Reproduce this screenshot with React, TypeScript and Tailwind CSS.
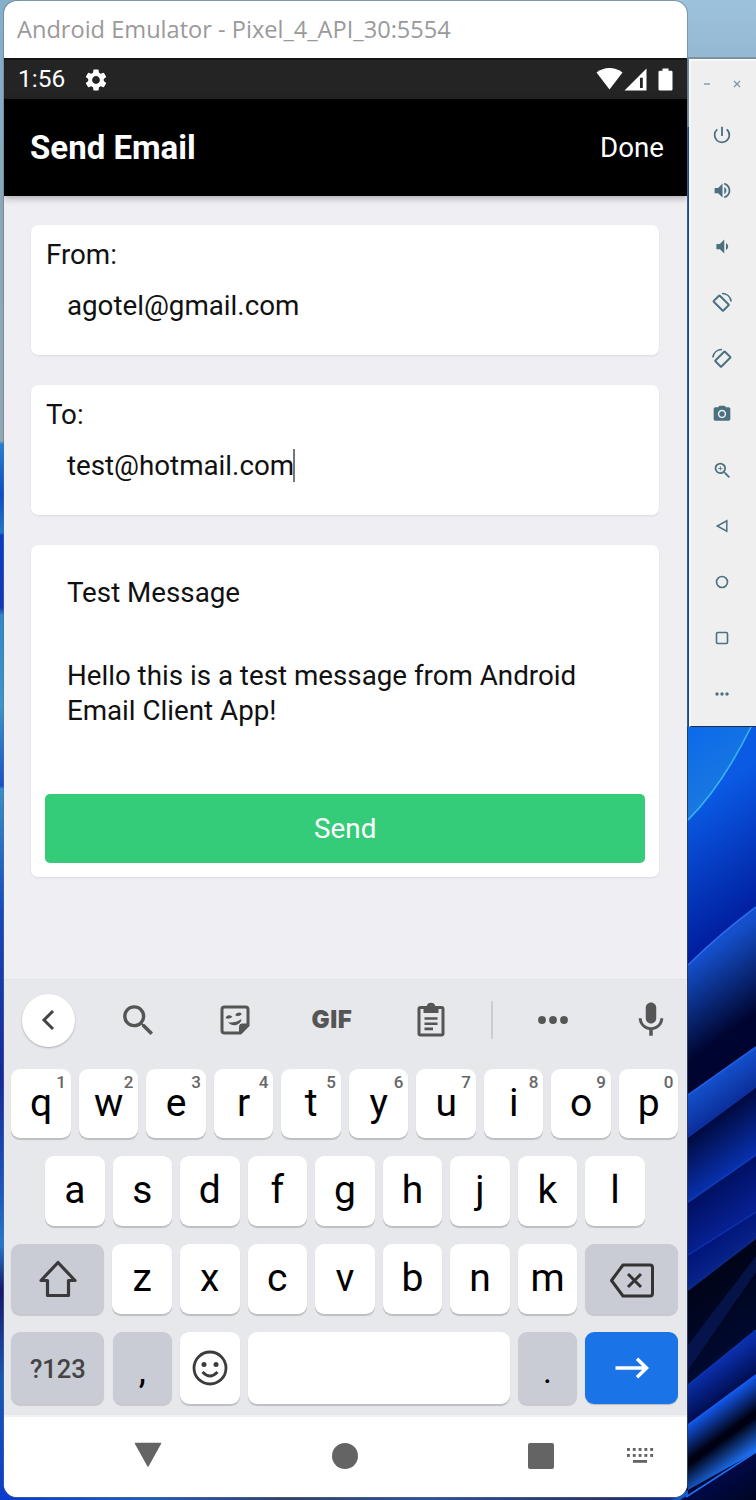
import type { ReactNode } from "react";
import {
  MdSettings,
  MdPowerSettingsNew,
  MdVolumeUp,
  MdVolumeDown,
  MdCameraAlt,
  MdZoomIn,
  MdSearch,
  MdMic,
} from "react-icons/md";

const bands = [
  { id: "a", d: "M688 727H751Q722 786 688 820Z", y1: 727, y2: 830, c1: "#0b6aea", c2: "#1c7ade" },
  { id: "b", d: "M688 820Q722 786 751 727H756V907Q722 932 688 965Z", y1: 810, y2: 965, c1: "#0a5ae4", c2: "#001c9c" },
  { id: "c", d: "M688 965Q722 932 756 907V1047L688 1095Z", y1: 965, y2: 1062, c1: "#1450cc", c2: "#000530" },
  { id: "d", d: "M688 1095L756 1047V1088L688 1140Z", y1: 1095, y2: 1142, c1: "#1450cc", c2: "#0a2a94" },
  { id: "e", d: "M688 1138L756 1088V1155L688 1202Z", y1: 1138, y2: 1202, c1: "#000a40", c2: "#0830ac" },
  { id: "f", d: "M688 1202L756 1155V1212L688 1255Z", y1: 1202, y2: 1255, c1: "#000f60", c2: "#062090" },
  { id: "g", d: "M688 1255L756 1212V1238L688 1290Z", y1: 1255, y2: 1290, c1: "#001478", c2: "#08248a" },
  { id: "h", d: "M688 1290L756 1238V1330L688 1385Z", y1: 1290, y2: 1385, c1: "#000418", c2: "#000a30" },
  { id: "i", d: "M688 1385L756 1330V1375L688 1425Z", y1: 1385, y2: 1425, c1: "#0a2ea8", c2: "#000c4c" },
  { id: "j", d: "M688 1425L756 1375V1425L688 1470Z", y1: 1425, y2: 1460, c1: "#1256e8", c2: "#000214" },
  { id: "k", d: "M688 1466L756 1418V1452L670 1500H688Z", y1: 1466, y2: 1498, c1: "#000214", c2: "#1c6cea" },
  { id: "l", d: "M680 1500L756 1452V1500Z", y1: 1495, y2: 1560, c1: "#000a4a", c2: "#00041c" },
];

const edges = [
  { d: "M688 820Q722 786 751 727", c: "#38b4f4" },
  { d: "M688 965Q722 932 756 907", c: "#2a6cea" },
  { d: "M688 1095L756 1047", c: "#1c5ee2" },
  { d: "M688 1202L756 1155", c: "#0e3cb8" },
  { d: "M688 1255L756 1212", c: "#0c30a4" },
  { d: "M688 1290L756 1238", c: "#0e2a88" },
  { d: "M688 1385L756 1330", c: "#0c36b4" },
  { d: "M688 1425L756 1375", c: "#185cee" },
  { d: "M686 1497L756 1452", c: "#1e70ee" },
];

function Wallpaper() {
  return (
    <svg className="absolute inset-0" width="756" height="1500" viewBox="0 0 756 1500">
      <defs>
        <linearGradient id="sky" x1="0" y1="0" x2="0" y2="1">
          <stop offset="0" stopColor="#9dc2db" />
          <stop offset="1" stopColor="#94b8d2" />
        </linearGradient>
        <linearGradient id="side" gradientUnits="userSpaceOnUse" x1="0" y1="0" x2="0" y2="1500">
          <stop offset="0" stopColor="#85b0ca" />
          <stop offset="0.14" stopColor="#8aa6b8" />
          <stop offset="0.294" stopColor="#94a6b2" />
          <stop offset="0.296" stopColor="#2480d4" />
          <stop offset="0.33" stopColor="#0c4cc8" />
          <stop offset="0.355" stopColor="#1c78c8" />
          <stop offset="0.357" stopColor="#0c3ac8" />
          <stop offset="0.405" stopColor="#1238b8" />
          <stop offset="0.41" stopColor="#2e88cc" />
          <stop offset="0.47" stopColor="#3c96c8" />
          <stop offset="0.524" stopColor="#1850cc" />
          <stop offset="0.526" stopColor="#3890c8" />
          <stop offset="0.6" stopColor="#1850c4" />
          <stop offset="0.61" stopColor="#1846bc" />
          <stop offset="0.72" stopColor="#16289c" />
          <stop offset="0.8" stopColor="#1c5cc4" />
          <stop offset="0.83" stopColor="#2478cc" />
          <stop offset="0.86" stopColor="#17186c" />
          <stop offset="0.92" stopColor="#1858b8" />
          <stop offset="1" stopColor="#0c3ccc" />
        </linearGradient>
        <linearGradient id="foot">
          <stop offset="0" stopColor="#0c3ccc" />
          <stop offset="0.2" stopColor="#245cb8" />
          <stop offset="0.4" stopColor="#34406c" />
          <stop offset="0.6" stopColor="#2c5494" />
          <stop offset="0.85" stopColor="#2c3468" />
          <stop offset="1" stopColor="#0c2c90" />
        </linearGradient>
        {bands.map((b) => (
          <linearGradient
            key={b.id}
            id={`band-${b.id}`}
            gradientUnits="userSpaceOnUse"
            x1="0"
            y1={b.y1}
            x2="0"
            y2={b.y2}
            gradientTransform="translate(688 0) skewY(-36)"
          >
            <stop offset="0" stopColor={b.c1} />
            <stop offset="1" stopColor={b.c2} />
          </linearGradient>
        ))}
      </defs>
      <rect x="0" y="0" width="756" height="60" fill="url(#sky)" />
      <rect x="0" y="0" width="20" height="1500" fill="url(#side)" />
      <rect x="680" y="59" width="12" height="68" fill="#6f8ea3" />
      <rect x="680" y="127" width="12" height="600" fill="#164a96" />
      <rect x="688" y="57" width="68" height="2" fill="#7d93a2" />
      <rect x="10" y="1480" width="690" height="20" fill="url(#foot)" />
      <rect x="686" y="727" width="70" height="773" fill="#000838" />
      {bands.map((b) => (
        <path key={b.id} d={b.d} fill={`url(#band-${b.id})`} />
      ))}
      <path d="M688 1345L756 1256V1272L688 1370Z" fill="#0a2478" opacity="0.45" />
      {edges.map((e) => (
        <path key={e.d} d={e.d} stroke={e.c} strokeWidth="1.6" fill="none" />
      ))}
    </svg>
  );
}

function RotateIcon({ mirrored }: { mirrored?: boolean }) {
  return (
    <svg width="22" height="22" viewBox="0 0 22 22" fill="none" className={mirrored ? "-scale-x-100" : ""}>
      <rect x="5.9" y="4.3" width="8.6" height="13.6" rx="0.6" transform="rotate(-45 10.2 11.1)" stroke="currentColor" strokeWidth="2" />
      <path d="M11 1.5c4.6 0 8.400 3.100 9.200 8" stroke="currentColor" strokeWidth="1.600" />
    </svg>
  );
}

const tools: { name: string; icon: ReactNode }[] = [
  { name: "Power", icon: <MdPowerSettingsNew size={22} /> },
  { name: "Volume up", icon: <MdVolumeUp size={21} /> },
  { name: "Volume down", icon: <MdVolumeDown size={21} /> },
  { name: "Rotate left", icon: <RotateIcon /> },
  { name: "Rotate right", icon: <RotateIcon mirrored /> },
  { name: "Screenshot", icon: <MdCameraAlt size={20} /> },
  { name: "Zoom", icon: <MdZoomIn size={21} /> },
  {
    name: "Back",
    icon: (
      <svg width="16" height="16" viewBox="0 0 16 16" fill="none">
        <path d="M12.800 2.800v10.400L3.200 8z" stroke="currentColor" strokeWidth="1.500" />
      </svg>
    ),
  },
  {
    name: "Home",
    icon: (
      <svg width="16" height="16" viewBox="0 0 16 16" fill="none">
        <circle cx="8" cy="8" r="5.500" stroke="currentColor" strokeWidth="1.600" />
      </svg>
    ),
  },
  {
    name: "Overview",
    icon: (
      <svg width="16" height="16" viewBox="0 0 16 16" fill="none">
        <rect x="2.500" y="2.500" width="11" height="11" rx="1.200" stroke="currentColor" strokeWidth="1.600" />
      </svg>
    ),
  },
  {
    name: "More",
    icon: (
      <svg width="16" height="16" viewBox="0 0 16 16" fill="currentColor">
        <circle cx="3" cy="8" r="1.700" />
        <circle cx="8" cy="8" r="1.700" />
        <circle cx="13" cy="8" r="1.700" />
      </svg>
    ),
  },
];

function ToolPanel() {
  return (
    <aside className="mt-[59px] ml-[2px] flex h-[668px] w-[67px] flex-col border-t-2 border-b border-l-2 border-t-[#f8f8f9] border-b-[#222c48] border-l-[#f8f8f9] bg-[#efeff0] text-[#4b7181]">
      <div className="flex h-[46px] shrink-0 items-center pl-[10px] text-[#8096a2]">
        <svg width="12" height="12" viewBox="0 0 12 12">
          <path d="M3 6h6" stroke="currentColor" strokeWidth="1.400" />
        </svg>
        <svg width="12" height="12" viewBox="0 0 12 12" className="ml-[18px]">
          <path d="M3 3l6 6M9 3l-6 6" stroke="currentColor" strokeWidth="1.300" />
        </svg>
      </div>
      {tools.map((t) => (
        <button key={t.name} aria-label={t.name} className="flex h-[55.9px] w-[62px] shrink-0 items-center justify-center">
          {t.icon}
        </button>
      ))}
    </aside>
  );
}

function StatusBar() {
  return (
    <div className="flex h-[41px] shrink-0 items-center border-t-2 border-[#151515] bg-[#242424] pl-[14px] text-white">
      <span className="w-[65px] text-[24.5px] leading-none">1:56</span>
      <MdSettings size={26} />
      <svg className="mr-[14px] mb-[2px] ml-auto" width="77" height="24" viewBox="0 0 77 24" fill="white">
        <path d="M0.500 5.500C7.500-.6 19.500-.6 26.500 5.500L13.500 22.500Z" />
        <path fillRule="evenodd" d="M28.500 23.500L50.500 1.500V23.500ZM44 10.800V21H46.800V10.800Z" />
        <path d="M66.500 1.500h6v2.200h2.700q1.300 0 1.300 1.300v17.200q0 1.300-1.300 1.300h-11.400q-1.300 0-1.300-1.300V5q0-1.300 1.300-1.300h2.700z" />
      </svg>
    </div>
  );
}

function Card({ className, children }: { className: string; children: ReactNode }) {
  return (
    <section className={`mr-[28px] ml-[27.400px] rounded-[7px] bg-white shadow-[0_1px_2px_rgba(0,0,0,0.09)] ${className}`}>{children}</section>
  );
}

function Field({ label, value, caret }: { label: string; value: string; caret?: boolean }) {
  return (
    <Card className="mb-[30px] h-[130px] px-[14.500px] pt-[12px]">
      <div className="h-[36px] leading-[36px]">{label}</div>
      <div className="mt-[15px] flex h-[36px] items-center pl-[21px]">
        <span>{value}</span>
        {caret && <span className="-ml-px h-[33px] w-[1.5px] bg-[#777]" />}
      </div>
    </Card>
  );
}

function Key({ label, hint }: { label: string; hint?: string }) {
  return (
    <button className="relative flex h-full w-[59.5px] items-center justify-center rounded-[9px] bg-white pb-[1px] text-[39px] leading-none text-black shadow-[0_2px_1px_rgba(0,0,0,0.18)]">
      {label}
      {hint && <span className="absolute top-[4px] right-[5px] text-[17px] leading-[19px] font-medium text-[#666]">{hint}</span>}
    </button>
  );
}

const modKey = "flex h-full items-center justify-center rounded-[9px] bg-[#c9ccd5] shadow-[0_2px_1px_rgba(0,0,0,0.14)]";

function Suggestions() {
  return (
    <div className="flex h-[89px] items-center pb-[9px] text-[#555]">
      <div className="flex w-[88px] justify-center">
        <span className="flex size-[53px] items-center justify-center rounded-full bg-white shadow-[0_1px_2px_rgba(0,0,0,0.25)]">
          <svg width="24" height="24" viewBox="0 0 24 24" fill="none" stroke="#444" strokeWidth="3">
            <path d="M17 3L8 12l9 9" />
          </svg>
        </span>
      </div>
      <div className="flex w-[92px] justify-center">
        <MdSearch size={41} />
      </div>
      <div className="flex w-[102px] justify-center">
        <svg width="32" height="32" viewBox="0 0 32 32" fill="none" stroke="currentColor" strokeWidth="3">
          <path d="M5.500 3h21q2.500 0 2.500 2.500V21.500L21.500 29h-16Q3 29 3 26.500v-21Q3 3 5.500 3Z" />
          <path d="M29 20h-6q-2.500 0-2.500 2.500V29Z" fill="currentColor" strokeWidth="1" />
          <path d="M9 18.200c3.500.8 9 .2 13.500-3.200-.5 6.500-9.500 8.500-13.500 3.200Z" fill="currentColor" stroke="none" />
          <path d="M8 14.500c.5-2 3-2.500 4.200-.9M17.500 11.700c.7-1.700 3-2.200 4.200-.7" />
        </svg>
      </div>
      <div className="flex w-[92px] justify-center font-[Inter,sans-serif] text-[24px] leading-none font-black tracking-[0.6px]">
        GIF
      </div>
      <div className="flex w-[106px] justify-center">
        <svg width="30" height="36" viewBox="0 0 30 36" fill="none" stroke="currentColor" strokeWidth="3">
          <path d="M4.500 5.500h21q1.500 0 1.500 1.500v24.500q0 1.500-1.500 1.500h-21Q3 33 3 31.500V7q0-1.500 1.500-1.500Z" />
          <path
            fillRule="evenodd"
            d="M7.500 4h3.200a4.500 4.500 0 0 1 8.600 0h3.200v7h-15ZM15 3.700a1.500 1.500 0 1 0 0 3 1.500 1.500 0 1 0 0-3Z"
            fill="currentColor"
            stroke="none"
          />
          <path d="M8.500 16.500h13M8.500 21.700h13M8.500 26.900h8.500" strokeWidth="2.600" />
        </svg>
      </div>
      <div className="flex w-[16px] justify-center">
        <span className="h-[38px] w-[1.5px] bg-[#cccdd0]" />
      </div>
      <div className="flex w-[106px] justify-center">
        <svg width="32" height="10" viewBox="0 0 32 10" fill="currentColor">
          <circle cx="5" cy="5" r="3.900" />
          <circle cx="16" cy="5" r="3.900" />
          <circle cx="27" cy="5" r="3.900" />
        </svg>
      </div>
      <div className="flex w-[81px] justify-center pl-[8px]">
        <MdMic size={42} />
      </div>
    </div>
  );
}

function Keyboard() {
  return (
    <div className="h-[436px] shrink-0 border-t border-[#e2e3e6] bg-[#e7e8ec]">
      <Suggestions />
      <div className="flex flex-col gap-[18px] pr-[8.500px] pl-[7.400px]">
        <div className="flex h-[69px] justify-between">
          {"qwertyuiop".split("").map((k, i) => (
            <Key key={k} label={k} hint={String((i + 1) % 10)} />
          ))}
        </div>
        <div className="flex h-[70px] justify-between px-[33.700px]">
          {"asdfghjkl".split("").map((k) => (
            <Key key={k} label={k} />
          ))}
        </div>
        <div className="flex h-[70px] justify-between">
          <button aria-label="Shift" className={`${modKey} w-[93px]`}>
            <svg width="40" height="40" viewBox="0 0 40 40" fill="none" stroke="#3a3a3c" strokeWidth="3.200" strokeLinejoin="round">
              <path d="M20 3.500L37 21.500H30.500V36.500H9.500V21.500H3Z" />
            </svg>
          </button>
          {"zxcvbnm".split("").map((k) => (
            <Key key={k} label={k} />
          ))}
          <button aria-label="Backspace" className={`${modKey} w-[93px] pt-[3px]`}>
            <svg width="46" height="36" viewBox="0 0 46 36" fill="none" stroke="#333" strokeWidth="3" strokeLinejoin="round">
              <path d="M14 2H41q2.500 0 2.500 2.500v26q0 2.500-2.500 2.500H14L2.500 17.500Z" />
              <path d="M19 11l13 13M32 11l-13 13" />
            </svg>
          </button>
        </div>
        <div className="flex h-[72px] justify-between">
          <button className={`${modKey} w-[93px] pt-[2px] text-[25.5px] font-medium text-[#444]`}>?123</button>
          <button className={`${modKey} w-[59.5px] pt-[6px] text-[36px] leading-none text-black`}>,</button>
          <button
            aria-label="Emoji"
            className="flex h-full w-[59.5px] items-center justify-center rounded-[9px] bg-white shadow-[0_2px_1px_rgba(0,0,0,0.18)]"
          >
            <svg width="38" height="38" viewBox="0 0 38 38" fill="none" stroke="#3c3c3c" strokeWidth="2.800">
              <circle cx="19" cy="19" r="16" />
              <circle cx="13" cy="15.500" r="2.500" fill="#3c3c3c" stroke="none" />
              <circle cx="25" cy="15.500" r="2.500" fill="#3c3c3c" stroke="none" />
              <path d="M11.500 23q7.500 8 15 0" />
            </svg>
          </button>
          <button aria-label="Space" className="h-full w-[262px] rounded-[9px] bg-white shadow-[0_2px_1px_rgba(0,0,0,0.18)]" />
          <button className={`${modKey} w-[59.5px] pt-[6px] text-[34px] leading-none text-black`}>.</button>
          <button
            aria-label="Next"
            className="flex h-full w-[93px] items-center justify-center rounded-[9px] bg-[#1b73e8] shadow-[0_1px_1px_rgba(0,0,0,0.2)]"
          >
            <svg width="36" height="24" viewBox="0 0 36 24" fill="none" stroke="white" strokeWidth="3.500">
              <path d="M1.500 12H32M23 2.700L32.500 12l-9.500 9.300" />
            </svg>
          </button>
        </div>
      </div>
    </div>
  );
}

function NavBar() {
  return (
    <div className="flex h-[82px] shrink-0 items-center border-t-2 border-[#f1f1f1] bg-white pb-[2px] text-[#646464]">
      <div className="flex w-[288px] justify-center pb-[3px]">
        <svg width="28" height="26" viewBox="0 0 28 26">
          <path d="M1.500 1.500H26.500L14 24Z" fill="currentColor" stroke="currentColor" strokeWidth="1.500" strokeLinejoin="round" />
        </svg>
      </div>
      <div className="flex w-[106px] justify-center">
        <span className="size-[26px] rounded-full bg-[#646464]" />
      </div>
      <div className="flex w-[287px] items-center">
        <span className="ml-[130px] size-[26px] rounded-[2px] bg-[#646464]" />
        <svg className="ml-[72px]" width="28" height="18" viewBox="0 0 28 18" fill="currentColor">
          {[0, 1, 2, 3, 4].map((i) => (
            <g key={i}>
              <rect x={1 + i * 5.8} y="1" width="2.900" height="2.900" />
              <rect x={1 + i * 5.8} y="7" width="2.900" height="2.900" />
            </g>
          ))}
          <rect x="7" y="13" width="14" height="2.800" />
        </svg>
      </div>
    </div>
  );
}

export default function App() {
  return (
    <div className="relative h-[1500px] w-[756px] overflow-hidden font-[Roboto,sans-serif]">
      <Wallpaper />
      <div className="relative flex h-full w-full items-start pl-[4px]">
        <main className="mt-[1px] flex h-[1496px] w-[683px] shrink-0 flex-col overflow-hidden rounded-[13px] bg-white shadow-[0_0_0_1px_rgba(90,110,130,0.5)]">
          <div className="flex h-[57px] shrink-0 items-center pl-[13px] font-['Open_Sans','Noto_Sans',sans-serif] text-[23.6px] text-[#9a9a9a]">
            Android Emulator - Pixel_4_API_30:5554
          </div>
          <StatusBar />
          <header className="relative flex h-[97px] shrink-0 items-center justify-between bg-black pr-[23px] pl-[26px] text-white shadow-[0_2px_7px_rgba(0,0,0,0.3)]">
            <h1 className="pt-px text-[33px] font-bold">Send Email</h1>
            <button className="pt-px text-[27.7px]">Done</button>
          </header>
          <div className="h-[783px] shrink-0 bg-[#eeeef3] pt-[28.500px] text-[27.75px] text-[#111]">
            <Field label="From:" value="agotel@gmail.com" />
            <Field label="To:" value="test@hotmail.com" caret />
            <Card className="h-[332.500px] px-[14px] pt-[30px]">
              <div className="pl-[21.500px] leading-[36px]">Test Message</div>
              <p className="mt-[47px] h-[136.500px] pl-[21.500px] leading-[35px]">
                Hello this is a test message from Android
                <br />
                Email Client App!
              </p>
              <button className="flex h-[69px] w-full items-center justify-center rounded-[5px] bg-[#34cc78] pt-px text-white">Send</button>
            </Card>
          </div>
          <Keyboard />
          <NavBar />
        </main>
        <ToolPanel />
      </div>
    </div>
  );
}
